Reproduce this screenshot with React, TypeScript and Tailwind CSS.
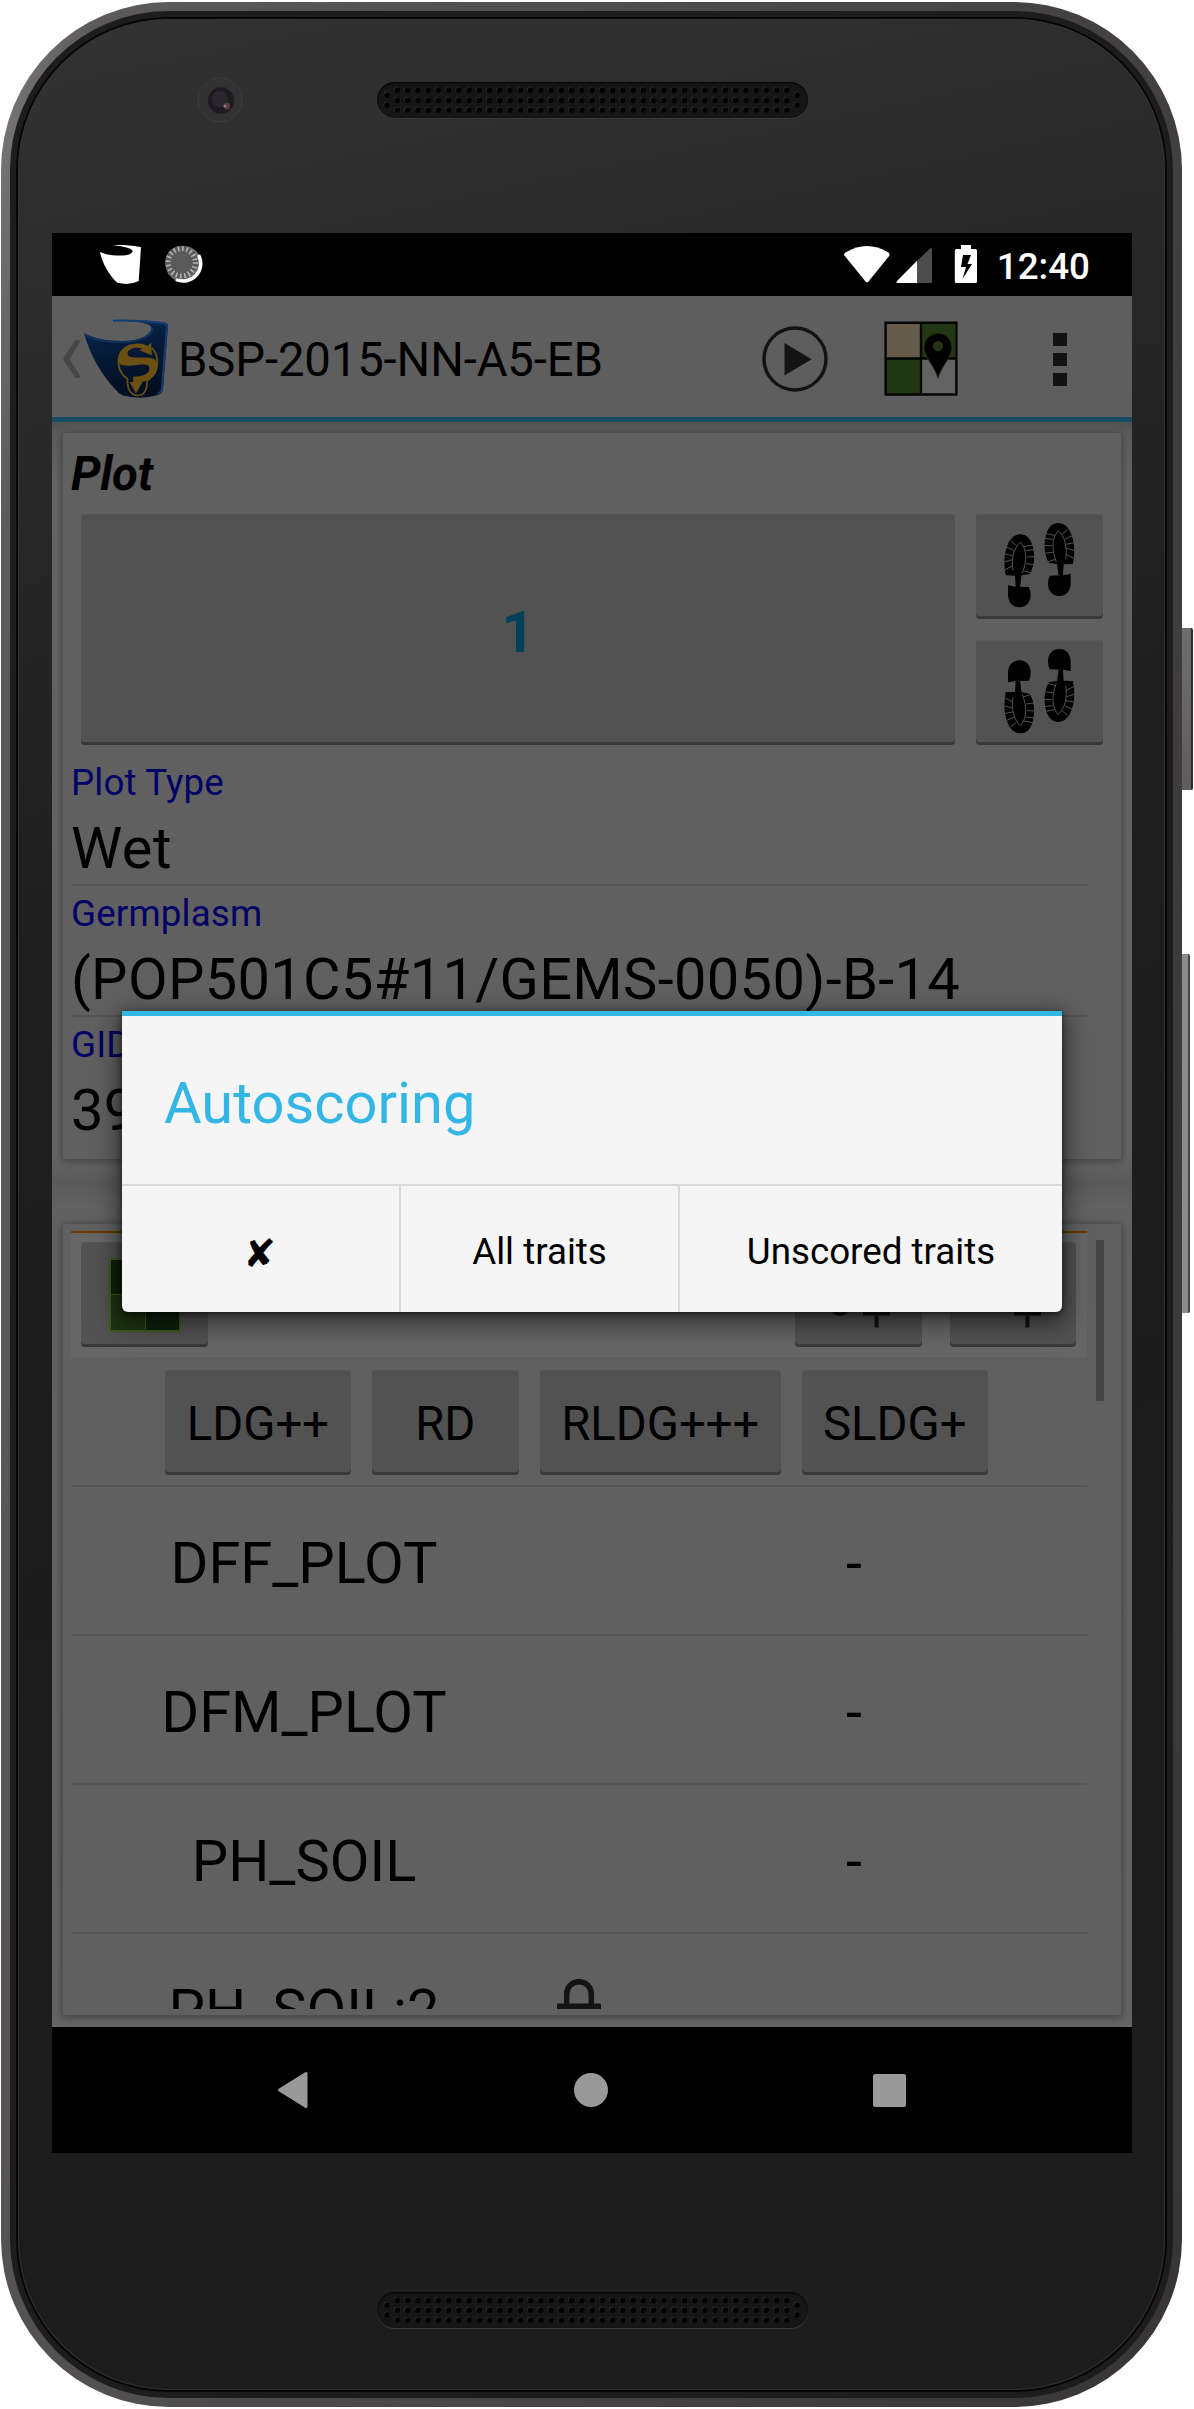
import React from "react";

const GREY_BUTTON =
  "flex items-center justify-center rounded-[4px] bg-[#525252] shadow-[inset_0_1px_0_#575757,inset_0_-3px_0_#3a3a3a]";

function Speaker() {
  const dots: [number, number][] = [];
  for (let i = 0; i < 39; i++) {
    for (let r = 0; r < 3; r++) dots.push([20.3 + i * 10.25, 8.3 + r * 9.9]);
  }
  dots.push([10, 13.2], [10, 23], [420, 13.2], [420, 23]);
  return (
    <div className="h-[36px] w-[431px] rounded-full bg-[#161616] shadow-[0_1px_1px_#3d3d3d,inset_0_1px_2px_#000000]">
      <svg width="431" height="36" viewBox="0 0 431 36">
        {dots.map(([cx, cy], i) => (
          <g key={i}>
            <circle cx={cx - 0.8} cy={cy - 0.8} r="2.6" fill="#303030" />
            <circle cx={cx} cy={cy} r="2.7" fill="#020202" />
          </g>
        ))}
      </svg>
    </div>
  );
}

function FrontCamera() {
  return (
    <svg width="46" height="46" viewBox="0 0 46 46">
      <circle cx="23" cy="23" r="22" fill="#323233" stroke="#3d3d3e" strokeWidth="1" />
      <circle cx="24" cy="23.5" r="13.2" fill="#1d1b20" />
      <circle cx="23" cy="22" r="8" fill="#29262f" />
      <ellipse cx="30" cy="29" rx="3" ry="3.4" fill="#5c3a39" />
      <circle cx="28" cy="29" r="1.6" fill="#8a7a80" />
    </svg>
  );
}

function StatusBar() {
  return (
    <div className="flex h-[63px] items-center bg-black">
      <svg width="160" height="63" viewBox="52 233 160 63">
        <path
          fill="#fff"
          d="M113 245.2C125 244.5 135 245.6 141 247.3L138.7 281Q129 286 117 282.6C108 274 102 262 100 252C108 256 125 256.6 130 254C137 249.5 129 247 113 245.2Z"
        />
        <circle cx="183.500" cy="264" r="18" fill="#777" />
        <path d="M198.500 255A17.500 17.500 0 0 1 176 279.500" fill="none" stroke="#fff" strokeWidth="3.500" />
        <circle cx="181.700" cy="262.300" r="16.600" fill="#5a5a5a" />
        <circle cx="181.700" cy="262.300" r="13.600" fill="none" stroke="#b4b4b4" strokeWidth="5" strokeDasharray="1.6 2.672" />
      </svg>
      <div className="flex-1" />
      <svg width="144" height="63" viewBox="838 233 144 63">
        <path fill="#fff" d="M843 255Q843 253.500 845 252.200Q866 240 887 252.200Q889 253.500 888.500 255.500L867.500 281.500Q866 283.200 864.500 281.500Z" />
        <path fill="#4d4d4d" d="M929 248.500Q931 247 931 249.500V282Q931 283 930 283H915V262Z" />
        <path fill="#fff" d="M916 260.800V283H897Q894.500 283 896 281Z" />
        <path
          fill="#fff"
          fillRule="evenodd"
          d="M960 245H970V249H974.500Q976 249 976 250.500V281.500Q976 283 974.500 283H955.300Q953.800 283 953.800 281.500V250.500Q953.800 249 955.300 249H960ZM962 255L960 267H965L961.500 279L971 264H966.500L970 255Z"
        />
      </svg>
      <span className="mr-[42px] ml-[14px] pt-[4px] text-[36.75px] leading-[43px] font-medium text-white">12:40</span>
    </div>
  );
}

function AppLogo() {
  return (
    <svg width="92" height="90" viewBox="80 314 92 90">
      <defs>
        <linearGradient id="pail" x1="0" y1="0" x2="0.2" y2="1">
          <stop offset="0" stopColor="#0c2f5e" />
          <stop offset="0.35" stopColor="#051d3d" />
          <stop offset="1" stopColor="#020e22" />
        </linearGradient>
      </defs>
      <path
        fill="url(#pail)"
        d="M109.500 320.300C130 319 155 321 164 322.500Q167 323 167 326L162 389Q161.500 393 157 395Q140 400 122 395.500Q118 394 114 389C99 373 88 352 83 333C95 340 115 342 130 340.500C143 339 150.500 333 150.500 328C150 322 130 321 109.500 320.300Z"
      />
      <path
        fill="none"
        stroke="#143c73"
        strokeWidth="2"
        d="M112 320.800C132 320 155 322 162.500 323.200Q166 324 165.800 327L161 388Q160.500 392 156.500 394"
      />
      <path
        fill="none"
        stroke="#103569"
        strokeWidth="1.600"
        d="M84 334.500C95 341.500 115 343 130 341.500C144 340 151.500 334 151.500 328"
      />
      <path
        fill="none"
        stroke="#6b5012"
        strokeWidth="1.700"
        d="M118 358C116 368 121 375 126.500 379C126 388 129 395.500 137 395.500C144 395.500 146.500 388 146 381C155 375 157.500 364 155.500 356C154 351 152 349 150.500 348"
      />
      <path
        fill="#6b5012"
        d="M116.800 361C116.500 351 124 344 136 343.500C141 343.400 144 344.300 146.500 346L150.200 342.500L150.800 355.500L138.500 350.300L141.500 348.300C135 346.500 127 348.500 126.500 353C126.500 357 131 358 138 357.500C149 357 156.500 358 156.800 365C157 375 149 381 139.500 382H141.500L135 393.500L128.500 382H132.300V376.500C141 377 148.500 374 148.500 368.500C148 364 143 364.300 136 365C127 366 118 366.500 116.800 361Z"
      />
    </svg>
  );
}

function MapIcon() {
  return (
    <svg width="74" height="75" viewBox="884 321.500 74 75">
      <rect x="886" y="323.500" width="34" height="35" fill="#665c4b" />
      <rect x="921" y="323.500" width="34" height="35" fill="#213613" />
      <rect x="886" y="359.500" width="34" height="35" fill="#213613" />
      <rect x="921" y="359.500" width="34" height="35" fill="#626262" />
      <path d="M885.600 323.300H956.400V395H885.600ZM921 323V395M885 359H956" fill="none" stroke="#050505" strokeWidth="2.400" />
      <path
        d="M938 379C935 367 924 358 924 347.500A14 14 0 0 1 952 347.500C952 358 941 367 938 379ZM938 342A4.700 4.700 0 1 0 938 351.400A4.700 4.700 0 1 0 938 342Z"
        fill="#000"
        fillRule="evenodd"
        stroke="#3b3514"
        strokeWidth="0.800"
      />
    </svg>
  );
}

function ActionBar() {
  return (
    <div className="flex h-[126px] items-center border-b-[5px] border-[#154c61] bg-[#5e5e5e] pt-[4px]">
      <svg width="18" height="38" viewBox="63 340.500 18 38" className="ml-[11px]">
        <path d="M75 340.700H81L69.700 359.500L81 378.200H75L63 359.500Z" fill="#474747" />
      </svg>
      <AppLogo />
      <span className="ml-[5px] pt-[3px] text-[47.25px] leading-[56px] tracking-[-0.12px] whitespace-nowrap text-black">BSP-2015-NN-A5-EB</span>
      <div className="flex-1" />
      <svg width="68" height="68" viewBox="0 0 68 68">
        <circle cx="34" cy="34" r="31" fill="none" stroke="#131313" strokeWidth="3.400" />
        <path d="M23.500 18V50.500L50.700 34.300Z" fill="#131313" />
      </svg>
      <div className="ml-[55px]">
        <MapIcon />
      </div>
      <div className="mr-[65px] ml-[95px] flex flex-col gap-[6.500px] pt-[2px]">
        <div className="h-[13.500px] w-[14px] bg-[#121212]" />
        <div className="h-[13.500px] w-[14px] bg-[#121212]" />
        <div className="h-[13.500px] w-[14px] bg-[#121212]" />
      </div>
    </div>
  );
}

function Foot() {
  return (
    <g>
      <path d="M136 213C130 180 130 150 142 122C150 100 165 90 180 90C198 90 210 103 216 122C224 150 224 180 209 209L184 213L179 248H166L164 214Z" fill="#000" />
      <g fill="none" stroke="#525252" strokeWidth="3">
        <path d="M158 198C152 165 160 130 180 113C198 132 202 165 186 207" />
        <path d="M152 110L168 123M138 128L161 139M132 149L157 154M130 173L156 166M132 197L158 184" />
        <path d="M191 127L217 122M196 139L222 136M199 158L224 157M197 178L222 181M189 199L216 208" />
      </g>
      <path d="M143 243L166 247L206 248Q211 258 211 273C211 295 196 309 177 309C157 309 143 295 143 270Z" fill="#000" />
    </g>
  );
}

function Footprints({ reversed = false }: { reversed?: boolean }) {
  const flip = reversed ? "translate(0 399) scale(1 -1)" : "";
  return (
    <svg width="75" height="88.300" viewBox="125 50 225 265" className="mr-[1px] mb-[2px]">
      <g transform={flip}>
        <Foot />
      </g>
      <g transform={"translate(474 -34) scale(-1 1) " + flip}>
        <Foot />
      </g>
    </svg>
  );
}

function Field({ label, value }: { label: string; value: string }) {
  return (
    <div className="w-[1016px] border-b-2 border-[#555555] pt-[6px] pb-[2px] last:border-transparent">
      <div className="text-[36.75px] leading-[43px] tracking-[0.15px] text-[#000066]">{label}</div>
      <div className="mt-[10px] text-[57.75px] leading-[68px] tracking-[0.34px] whitespace-nowrap text-black">{value}</div>
    </div>
  );
}

function PlotCard() {
  return (
    <section className="h-[726px] rounded-[2px] bg-[#606060] pt-[14px] pl-2 shadow-[0_1px_7px_2px_#484848]">
      <h2 className="text-[47.25px] leading-[55px] font-bold tracking-[-0.3px] text-black italic">Plot</h2>
      <div className="mt-[12px] flex h-[231px] gap-[21px] pl-[10px]">
        <div className={GREY_BUTTON + " w-[874px]"}>
          <span className="pt-[4px] text-[57.75px] leading-[68px] font-bold text-[#004059]">1</span>
        </div>
        <div className="flex w-[127px] flex-col gap-[21px]">
          <div className={GREY_BUTTON + " h-[105px]"}>
            <Footprints />
          </div>
          <div className={GREY_BUTTON + " h-[105px]"}>
            <Footprints reversed />
          </div>
        </div>
      </div>
      <div className="mt-[10px]">
        <Field label="Plot Type" value="Wet" />
        <Field label="Germplasm" value="(POP501C5#11/GEMS-0050)-B-14" />
        <Field label="GID" value="39" />
      </div>
    </section>
  );
}

function TraitRow({ name, value, locked = false }: { name: string; value: string; locked?: boolean }) {
  return (
    <div className="flex h-[149px] items-center border-b-2 border-[#555555] pt-[5px] text-[57.75px] leading-[68px] text-black">
      <span className="w-[469px] pr-[3px] text-center">{name}</span>
      <span className="flex w-[78px] justify-center">
        {locked && (
          <svg width="44" height="60" viewBox="0 0 44 60" className="mb-[3px]">
            <path d="M9.700 26V15A12.300 12.300 0 0 1 34.300 15V26" fill="none" stroke="#141414" strokeWidth="5.500" />
            <rect x="0" y="24.500" width="44" height="34" rx="1" fill="#141414" />
          </svg>
        )}
      </span>
      <span className="flex-1 pl-[3px] text-center">{value}</span>
    </div>
  );
}

function TraitsCard() {
  return (
    <section className="mt-[65px] flex h-[791px] items-start rounded-[2px] bg-[#606060] pt-[7px] pl-2 shadow-[0_1px_7px_2px_#484848]">
      <div className="h-[778px] w-[1016px] overflow-hidden">
        <div className="flex h-[126px] border-t-2 border-[#693b00] bg-[#666666] pt-[9px] pr-[11px] pl-[10px]">
          <div className={GREY_BUTTON + " h-[105px] w-[127px]"}>
            <svg width="72" height="74" viewBox="0 0 72 74">
              <rect width="72" height="74" fill="#3d5c1b" />
              <rect x="2" y="2" width="34" height="34" fill="#0f1f0a" />
              <rect x="37" y="2" width="33" height="34" fill="#1f3312" />
              <rect x="2" y="37" width="34" height="35" fill="#1f3312" />
              <rect x="37" y="37" width="33" height="35" fill="#0f1f0a" />
            </svg>
          </div>
          <div className="flex-1" />
          <div className={GREY_BUTTON + " h-[105px] w-[127px]"}>
            <svg width="62" height="70" viewBox="0 0 62 70" fill="none" stroke="#141414">
              <circle cx="12" cy="46" r="10" fill="#141414" stroke="none" />
              <path d="M35 53.500H62M48.500 38V67.500" strokeWidth="4" />
            </svg>
          </div>
          <div className={GREY_BUTTON + " ml-[28px] h-[105px] w-[126px]"}>
            <svg width="62" height="70" viewBox="0 0 62 70" fill="none" stroke="#141414">
              <path d="M32 53.500H59M45.500 38V67.500" strokeWidth="4" />
            </svg>
          </div>
        </div>
        <div className="flex h-[130px] gap-[20.500px] border-b-2 border-[#555555] pt-[13px] pl-[94px] text-[47.25px] leading-[56px] text-black">
          <div className={GREY_BUTTON + " h-[105px] w-[186px] pt-[3px]"}>LDG++</div>
          <div className={GREY_BUTTON + " h-[105px] w-[147.500px] pt-[3px]"}>RD</div>
          <div className={GREY_BUTTON + " h-[105px] w-[241.500px] pt-[3px]"}>RLDG+++</div>
          <div className={GREY_BUTTON + " h-[105px] w-[186.500px] pt-[3px]"}>SLDG+</div>
        </div>
        <TraitRow name="DFF_PLOT" value="-" />
        <TraitRow name="DFM_PLOT" value="-" />
        <TraitRow name="PH_SOIL" value="-" />
        <TraitRow name="PH_SOIL:2" value="" locked />
      </div>
      <div className="mt-[9px] ml-[9px] h-[161px] w-[8px] bg-[#444444]" />
    </section>
  );
}

function AutoscoringDialog() {
  return (
    <div
      role="dialog"
      className="absolute top-[778px] left-[70px] flex h-[301px] w-[940px] flex-col rounded-b-[6px] border-t-[5px] border-[#33b5e5] bg-[#f5f5f5] shadow-[0_8px_26px_4px_rgba(0,0,0,0.5),0_2px_6px_rgba(0,0,0,0.55)]"
    >
      <div className="flex h-[170px] items-center border-b-2 border-[#d9d9d9] pt-[6px] pl-[42px] text-[57.75px] leading-[68px] text-[#33b5e5]">
        Autoscoring
      </div>
      <div className="flex flex-1 text-[36.75px] leading-[43px] text-black">
        <div className="flex w-[279px] items-center justify-center border-r-2 border-[#d9d9d9] pt-[8px] pr-[2px] font-['DejaVu_Sans'] text-[39px]">✘</div>
        <div className="flex w-[279px] items-center justify-center border-r-2 border-[#d9d9d9] pt-[4px]">All traits</div>
        <div className="flex flex-1 items-center justify-center pt-[4px]">Unscored traits</div>
      </div>
    </div>
  );
}

function NavigationBar() {
  return (
    <div className="flex h-[126px] items-center justify-between bg-black pr-[226px] pl-[225px]">
      <svg width="32" height="38" viewBox="0 0 32 38">
        <path d="M29 2.500V35.500L2.500 19Z" fill="#999" stroke="#999" strokeWidth="3" strokeLinejoin="round" />
      </svg>
      <div className="size-[34px] rounded-full bg-[#999999]" />
      <div className="h-[33px] w-[33px] rounded-[2px] bg-[#999999]" />
    </div>
  );
}

export default function App() {
  return (
    <div className="relative h-[2409px] w-[1194px] overflow-hidden bg-white pt-[2px] pl-[1px] font-[Roboto,sans-serif]">
      <div className="absolute top-[628px] left-[1178px] h-[162px] w-[15px] rounded-[2px] border-r-2 border-[#2a2a2a] bg-gradient-to-b from-[#6e6d6d] to-[#5f5c5d]" />
      <div className="absolute top-[954px] left-[1178px] h-[359px] w-[12px] rounded-[2px] border-r-2 border-[#444444] bg-[#8b8b8b]" />
      <div className="relative h-[2405px] w-[1181px] rounded-[168px] bg-[linear-gradient(100deg,#7d7b7d_0%,#5c5a5b_6%,#4a484a_50%,#3a3738_94%,#373435_100%)] p-[9px]">
        <div className="h-full rounded-[159px] bg-[#1e1d1e] p-[6px]">
          <div className="h-full rounded-[153px] bg-[#060606] p-[2px]">
            <div className="h-full rounded-[151px] bg-[linear-gradient(168deg,#333334_0%,#2a2a2a_14%,#1f1f1f_34%,#1c1c1d_60%,#1d1d1d_100%)] pl-[34px] shadow-[inset_0_0_1px_1px_#333333]">
              <div className="flex h-[214px] pt-[58px] pl-[145px]">
                <FrontCamera />
                <div className="mt-[5px] ml-[134px]">
                  <Speaker />
                </div>
              </div>
              <div className="relative flex h-[1920px] w-[1080px] flex-col overflow-hidden bg-black">
                <StatusBar />
                <ActionBar />
                <main className="flex-1 overflow-hidden bg-[linear-gradient(180deg,#525252_0px,#5c5c5c_12px,#646464_60px,#646464_737px,#5a5a5a_761px,#626262_785px,#646464_100%)] pt-[11px] pr-[11px] pl-[11px]">
                  <PlotCard />
                  <TraitsCard />
                </main>
                <NavigationBar />
                <AutoscoringDialog />
              </div>
              <div className="pt-[139px] pl-[325px]">
                <Speaker />
              </div>
            </div>
          </div>
        </div>
      </div>
    </div>
  );
}
